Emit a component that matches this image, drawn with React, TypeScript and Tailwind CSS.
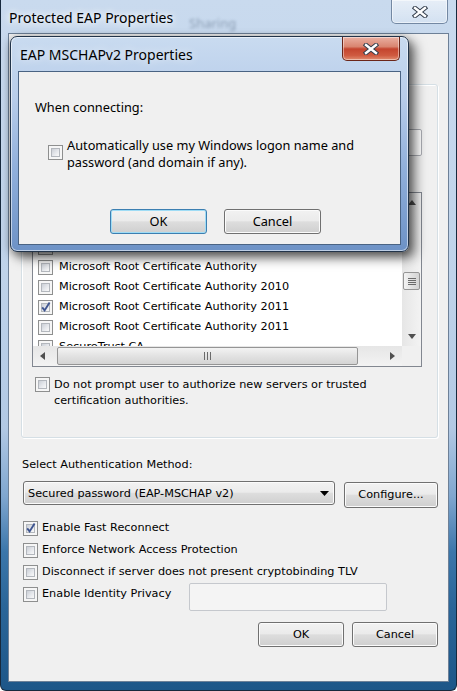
import React from 'react';

const outerFont = "font-['DejaVu_Sans',sans-serif] text-[11.25px] leading-[16px] text-black";
const innerFont = "font-['Noto_Sans',sans-serif] text-[12.75px] leading-[17px] text-black";

function CheckBox({ checked = false }: { checked?: boolean }) {
  return (
    <span className="flex h-[15px] w-[15px] shrink-0 border border-[#8e8f8f] bg-[#f6f6f6] p-[2px]">
      <span className="relative flex flex-1 border border-[#b3b7bd] bg-[linear-gradient(135deg,#cbcfd6_0%,#e6e8ec_55%,#f9f9f9_100%)]">
        {checked && (
          <svg className="absolute -left-[2px] -top-[3px]" width="12" height="12" viewBox="0 0 12 12">
            <path d="M2.2 6.4 L4.6 9.4 L9.6 1.6" fill="none" stroke="#3f5590" strokeWidth="1.9" />
          </svg>
        )}
      </span>
    </span>
  );
}

function WinButton({ label, className = '', isDefault = false }: { label: string; className?: string; isDefault?: boolean }) {
  return (
    <button
      className={`flex items-center justify-center rounded-[3px] border bg-[linear-gradient(#f2f2f2_0%,#ebebeb_46%,#dddddd_52%,#cfcfcf_100%)] ${
        isDefault
          ? 'border-[#3c7fb1] shadow-[inset_0_0_0_1px_#9fdcf5]'
          : 'border-[#707070] shadow-[inset_0_0_0_1px_#fbfbfb]'
      } ${className}`}
    >
      {label}
    </button>
  );
}

function CloseGlyph() {
  return (
    <svg width="16" height="12" viewBox="0 0 16 12">
      <path d="M3 2 L13 10 M13 2 L3 10" stroke="#333d4b" strokeWidth="4.4" strokeLinecap="square" />
      <path d="M3 2 L13 10 M13 2 L3 10" stroke="#ffffff" strokeWidth="2.4" strokeLinecap="square" />
    </svg>
  );
}

function Arrow({ dir }: { dir: 'up' | 'down' | 'left' | 'right' }) {
  const d = {
    up: 'M0 5 L4 0 L8 5 Z',
    down: 'M0 0 L8 0 L4 5 Z',
    left: 'M5 0 L5 8 L0 4 Z',
    right: 'M0 0 L5 4 L0 8 Z',
  }[dir];
  const vertical = dir === 'up' || dir === 'down';
  return (
    <svg width={vertical ? 8 : 5} height={vertical ? 5 : 8} viewBox={vertical ? '0 0 8 5' : '0 0 5 8'}>
      <path d={d} fill="#505050" />
    </svg>
  );
}

const certs = [
  { name: 'Equifax Secure Certificate Authority', checked: false },
  { name: 'GTE CyberTrust Global Root', checked: false },
  { name: 'Microsoft Authenticode(tm) Root Authority', checked: false },
  { name: 'Microsoft Root Certificate Authority', checked: false },
  { name: 'Microsoft Root Certificate Authority 2010', checked: false },
  { name: 'Microsoft Root Certificate Authority 2011', checked: true },
  { name: 'Microsoft Root Certificate Authority 2011', checked: false },
  { name: 'SecureTrust CA', checked: false },
];

function CertList() {
  return (
    <div className="ml-[10px] mt-[8px] flex h-[175px] w-[390px] flex-col border border-[#828790] bg-white">
      <div className="flex h-[153px]">
        <div className="flex-1 overflow-hidden pt-[4px]">
          {certs.map((c, i) => (
            <div key={i} className="flex h-[20px] items-center gap-[6px] whitespace-nowrap pl-[5px]">
              <CheckBox checked={c.checked} />
              <span>{c.name}</span>
            </div>
          ))}
        </div>
        {/* vertical scrollbar */}
        <div className="flex w-[19px] flex-col bg-[linear-gradient(90deg,#e6e6e6,#f3f3f3)]">
          <div className="flex h-[19px] items-center justify-center">
            <Arrow dir="up" />
          </div>
          <div className="mx-auto mt-[60px] flex h-[18px] w-[17px] flex-col items-center justify-center gap-[1px] rounded-[2px] border border-[#959595] bg-[linear-gradient(90deg,#f3f3f3,#e2e2e2_50%,#d4d4d4)]">
            <span className="h-[1px] w-[8px] bg-[#6b6b6b]" />
            <span className="h-[1px] w-[8px] bg-[#6b6b6b]" />
            <span className="h-[1px] w-[8px] bg-[#6b6b6b]" />
            <span className="h-[1px] w-[8px] bg-[#6b6b6b]" />
          </div>
          <div className="flex-1" />
          <div className="flex h-[19px] items-center justify-center">
            <Arrow dir="down" />
          </div>
        </div>
      </div>
      <div className="flex h-[20px]">
        <div className="flex flex-1 items-center bg-[linear-gradient(#e6e6e6,#f3f3f3)]">
          <div className="flex h-full w-[19px] items-center justify-center">
            <Arrow dir="left" />
          </div>
          <div className="ml-[5px] flex h-[18px] w-[301px] items-center justify-center gap-[1px] rounded-[2px] border border-[#959595] bg-[linear-gradient(#f3f3f3,#e2e2e2_50%,#d4d4d4)]">
            <span className="h-[8px] w-[1px] bg-[#6b6b6b]" />
            <span className="ml-[1px] h-[8px] w-[1px] bg-[#6b6b6b]" />
            <span className="ml-[1px] h-[8px] w-[1px] bg-[#6b6b6b]" />
          </div>
          <div className="ml-auto flex h-full w-[19px] items-center justify-center">
            <Arrow dir="right" />
          </div>
        </div>
        <div className="w-[19px] bg-[#f0f0f0]" />
      </div>
    </div>
  );
}

function MsChapDialog() {
  return (
    <div className="absolute left-[9px] top-[36px] flex h-[216px] w-[399px] flex-col rounded-[7px] border border-[#22344a] bg-[linear-gradient(180deg,#c9dbf0_0%,#b8cdea_28%,#90afdb_62%,#6d92c6_100%)] shadow-[inset_0_0_0_1px_rgba(255,255,255,0.55),6px_6px_12px_rgba(0,0,0,0.55),0_2px_8px_rgba(0,0,0,0.35)]">
      <div className="flex h-[34px] shrink-0 items-start">
        <span className="ml-[9px] mt-[8px] font-['Noto_Sans',sans-serif] text-[14px] leading-[20px] text-black [text-shadow:0_0_8px_rgba(255,255,255,0.9)]">
          EAP MSCHAPv2 Properties
        </span>
        <div className="ml-auto mr-[8px] flex h-[24px] w-[58px] items-center justify-center rounded-b-[5px] border border-t-0 border-[#6b2619] bg-[linear-gradient(#eab0a2_0%,#d98570_42%,#c4442e_52%,#cf5a40_80%,#e08d70_100%)] shadow-[inset_0_0_0_1px_rgba(255,255,255,0.45)]">
          <CloseGlyph />
        </div>
      </div>
      <div className={`mx-[7px] h-[174px] border border-[#4a6383] bg-[#f0f0f0] ${innerFont}`}>
        <div className="ml-[16px] mt-[27px]">When connecting:</div>
        <div className="ml-[29px] mt-[21px] flex gap-[4px]">
          <span className="mt-[8px]">
            <CheckBox />
          </span>
          <span>
            Automatically use my Windows logon name and
            <br />
            password (and domain if any).
          </span>
        </div>
        <div className="ml-[91px] mt-[38px] flex gap-[17px]">
          <WinButton label="OK" isDefault className="h-[25px] w-[97px]" />
          <WinButton label="Cancel" className="h-[25px] w-[97px]" />
        </div>
      </div>
    </div>
  );
}

export default function App() {
  return (
    <div className="relative h-[691px] w-[457px] overflow-hidden rounded-b-[6px] border-x border-b border-[#17293d] bg-[linear-gradient(180deg,#c9daee_0%,#bfd3ea_40%,#b2c9e4_62%,#7fa6cf_72%,#3b76aa_80%,#2a6598_88%,#1d5688_100%)]">
      <div className="flex h-full flex-col">
        {/* title bar */}
        <div className="relative flex h-[33px] shrink-0 items-start">
          <span className="absolute left-[188px] top-[14px] font-['Noto_Sans',sans-serif] text-[13px] text-[#61758d] opacity-60 blur-[1.4px]">
            Sharing
          </span>
          <span className="relative ml-[8px] mt-[8px] font-['Noto_Sans',sans-serif] text-[14px] leading-[20px] text-black [text-shadow:0_0_10px_#fff,0_0_6px_#fff]">
            Protected EAP Properties
          </span>
          <div className="ml-auto mr-[8px] flex h-[24px] w-[57px] items-center justify-center rounded-b-[5px] border border-t-0 border-[#7388a3] bg-[linear-gradient(rgba(255,255,255,0.55),rgba(255,255,255,0.2))] shadow-[inset_0_0_0_1px_rgba(255,255,255,0.5)]">
            <CloseGlyph />
          </div>
        </div>

        {/* client area */}
        <div className={`mx-[7px] mb-[8px] flex flex-1 flex-col border border-[#6d8097] bg-[#f0f0f0] ${outerFont}`}>
          {/* group box */}
          <div className="relative ml-[12px] mt-[50px] h-[354px] w-[417px] rounded-[3px] border border-[#d5dfe5] shadow-[inset_1px_1px_0_#fff,1px_1px_0_#fff]">
            <span className="absolute -top-[9px] left-[6px] bg-[#f0f0f0] px-[2px]">When connecting:</span>
            <div className="ml-[13px] mt-[9px] flex h-[16px] items-center gap-[4px]">
              <CheckBox checked />
              <span>Validate server certificate</span>
            </div>
            <div className="ml-[13px] flex h-[16px] items-center gap-[4px]">
              <CheckBox />
              <span>Connect to these servers:</span>
            </div>
            <div className="ml-[28px] mt-[3px] h-[27px] w-[372px] rounded-[2px] border border-[#abadb3] bg-white" />
            <div className="ml-[11px] mt-[12px] h-[16px]">Trusted Root Certification Authorities:</div>
            <CertList />
            <div className="ml-[13px] mt-[9px] flex items-start gap-[4px]">
              <span className="mt-[1px]">
                <CheckBox />
              </span>
              <span className="mt-[1px]">
                Do not prompt user to authorize new servers or trusted
                <br />
                certification authorities.
              </span>
            </div>
          </div>

          <div className="ml-[13px] mt-[19px] h-[16px]">Select Authentication Method:</div>
          <div className="ml-[14px] mt-[8px] flex items-start">
            <div className="flex h-[24px] w-[312px] items-center rounded-[3px] border border-[#707070] bg-[linear-gradient(#f2f2f2_0%,#ebebeb_46%,#dddddd_52%,#cfcfcf_100%)] pl-[4px] pt-[1px] shadow-[inset_0_0_0_1px_#fbfbfb]">
              <span>Secured password (EAP-MSCHAP v2)</span>
              <svg className="ml-auto mr-[5px]" width="9" height="5" viewBox="0 0 9 5">
                <path d="M0 0 L9 0 L4.5 5 Z" fill="#000" />
              </svg>
            </div>
            <WinButton label="Configure..." className="ml-[9px] mt-[1px] h-[26px] w-[94px]" />
          </div>

          <div className="ml-[14px] mt-[9px] flex flex-col">
            <div className="flex h-[22px] items-center gap-[4px]">
              <CheckBox checked />
              <span>Enable Fast Reconnect</span>
            </div>
            <div className="flex h-[22px] items-center gap-[4px]">
              <CheckBox />
              <span>Enforce Network Access Protection</span>
            </div>
            <div className="flex h-[22px] items-center gap-[4px]">
              <CheckBox />
              <span>Disconnect if server does not present cryptobinding TLV</span>
            </div>
            <div className="flex items-start">
              <div className="flex h-[22px] w-[166px] items-center gap-[4px]">
                <CheckBox />
                <span>Enable Identity Privacy</span>
              </div>
              <div className="h-[28px] w-[198px] rounded-[2px] border border-[#c5c8cd] bg-[#f4f4f4]" />
            </div>
          </div>

          <div className="mr-[10px] mt-[11px] flex justify-end gap-[8px]">
            <WinButton label="OK" className="h-[25px] w-[86px] pt-[1px]" />
            <WinButton label="Cancel" className="h-[25px] w-[86px] pt-[1px]" />
          </div>
        </div>
      </div>

      <MsChapDialog />
    </div>
  );
}
